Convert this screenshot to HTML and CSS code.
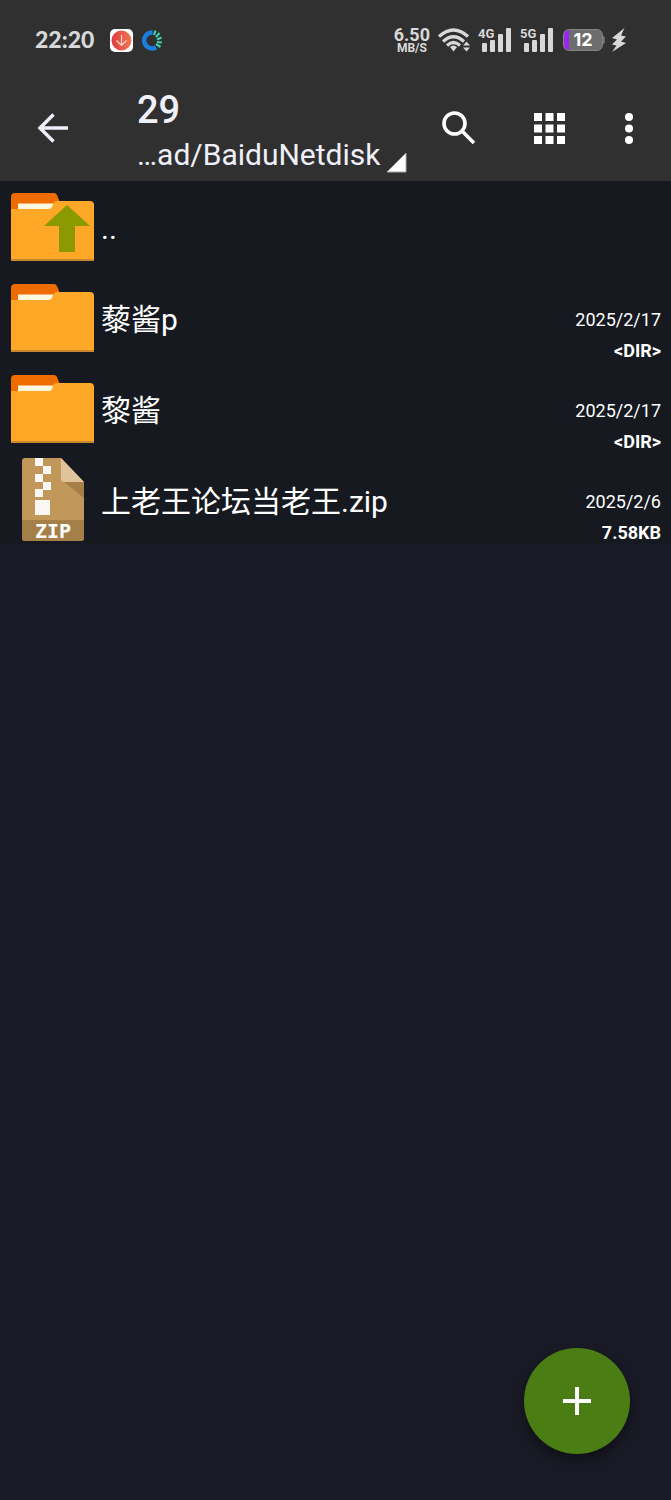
FILE: index.html
```html
<!DOCTYPE html>
<html lang="zh-CN">
<head>
<meta charset="utf-8">
<meta name="viewport" content="width=device-width, initial-scale=1">
<title>BaiduNetdisk</title>
<link rel="stylesheet" href="styles.css">
</head>
<body>
<svg class="defs" aria-hidden="true">
  <symbol id="folder" viewBox="0 0 84 84">
    <path fill="#ef6c00" d="M0 32V12q0-4 4-4h39q2 0 3 2l4 10v12z"/>
    <path fill="#fff8e1" d="M7 18.500h38v6H7z"/>
    <path fill="#ffa726" d="M0 24h38q2 0 3-2l1-3q1-3 4-3h33q4 0 4 4v56H0z"/>
    <path fill="#c9872d" d="M0 74h83v2H0z"/>
  </symbol>
</svg>
<header class="header">
  <div class="status">
    <time class="clock">22:20</time>
    <svg class="app-download" width="23" height="23" viewBox="0 0 23 23" aria-hidden="true">
      <defs><linearGradient id="red" x1="0" x2="1"><stop stop-color="#df3a42"/><stop offset="1" stop-color="#ee7852"/></linearGradient></defs>
      <rect width="23" height="23" rx="5" fill="#fff"/>
      <circle cx="11.500" cy="11.500" r="10" fill="url(#red)"/>
      <path d="M11.500 6v10M6.500 11.500l5 5 5-5" fill="none" stroke="#ffd9d0" stroke-width="1.200"/>
    </svg>
    <svg class="app-ring" width="21" height="21" viewBox="0 0 21 21" aria-hidden="true" fill="none">
      <path d="M11.500 2.500A8 8 0 1 0 15 17.500" stroke="#1b7fe0" stroke-width="4.500"/>
      <g stroke="#3fd0ae" stroke-width="2.200"><path d="M13 5l1.500-4.500M15 7l3.500-4M16 9.500l4.500-2M16 12l5 .5M15 14l4.500 3"/></g>
    </svg>
    <div class="speed"><span class="speed-value">6.50</span><span class="speed-unit">MB/S</span></div>
    <svg class="wifi" width="33" height="24" viewBox="0 0 33 24" aria-hidden="true">
      <g fill="none" stroke="#d8d8d8" stroke-width="3.200"><path d="M1 8.500Q15.500-4.500 30 8.500M5 13.500Q15.500 4 26 13.500M9 17.500Q15.500 11.500 22 17.500"/></g>
      <path fill="#d8d8d8" d="M12 19q3.500-3 7 0l-3.500 4.500zM25 17.500l3.500-4 3.500 4zM25 19.500h7l-3.500 4z"/>
    </svg>
    <div class="signal">
      <span class="network">4G</span>
      <svg width="29" height="24" viewBox="0 0 29 24" aria-hidden="true" fill="#d8d8d8"><rect y="15" width="5" height="9" rx="1"/><rect x="8" y="12" width="5" height="12" rx="1"/><rect x="16" y="6" width="5" height="18" rx="1"/><rect x="24" width="5" height="24" rx="1"/></svg>
    </div>
    <div class="signal">
      <span class="network">5G</span>
      <svg width="29" height="24" viewBox="0 0 29 24" aria-hidden="true" fill="#d8d8d8"><rect y="15" width="5" height="9" rx="1"/><rect x="8" y="12" width="5" height="12" rx="1"/><rect x="16" y="6" width="5" height="18" rx="1"/><rect x="24" width="5" height="24" rx="1"/></svg>
    </div>
    <div class="battery">12</div>
    <svg class="bolt" width="14" height="24" viewBox="0 0 14 24" aria-hidden="true"><path fill="#d8d8d8" d="M12.500 0L0 10l5 1.500-5 5 4.500 1L0 24l14-9-5-1.500 5-5-5-1z"/></svg>
  </div>
  <div class="toolbar">
    <button class="tool back" aria-label="返回"><svg width="32" height="30" viewBox="0 0 32 30" fill="none" stroke="#f0f0fa" stroke-width="3.500"><path d="M31 15H3M16.500 1.500L3 15l13.500 13.500"/></svg></button>
    <div class="heading">
      <h1 class="title">29</h1>
      <button class="path">…ad/BaiduNetdisk<svg class="corner" width="21" height="21" viewBox="0 0 21 21" aria-hidden="true"><path fill="#fff" stroke="#aaa" d="M20 1v19H1z"/></svg></button>
    </div>
    <button class="tool search" aria-label="搜索"><svg width="34" height="34" viewBox="0 0 34 34" fill="none" stroke="#fff" stroke-width="3.600"><circle cx="12.500" cy="12.500" r="10.500"/><path d="M20.500 20.500L32 32"/></svg></button>
    <button class="tool grid" aria-label="网格视图"><svg width="31" height="31" viewBox="0 0 31 31" fill="#fff"><path d="M0 0h8v8H0zM11.500 0h8v8h-8zM23 0h8v8h-8zM0 11.500h8v8H0zM11.500 11.500h8v8h-8zM23 11.500h8v8h-8zM0 23h8v8H0zM11.500 23h8v8h-8zM23 23h8v8h-8z"/></svg></button>
    <button class="tool more" aria-label="更多"><svg width="8" height="31" viewBox="0 0 8 31" fill="#fff"><circle cx="4" cy="4" r="4"/><circle cx="4" cy="15.500" r="4"/><circle cx="4" cy="27" r="4"/></svg></button>
  </div>
</header>
<main>
  <ul class="files">
    <li><a class="file" href="#up">
      <svg class="icon" viewBox="0 0 84 84" aria-hidden="true"><use href="#folder"/><path fill="#8a9a00" d="M56 20L79 41H64v26H48V41H33z"/></svg>
      <span class="name">..</span>
    </a></li>
    <li><a class="file" href="#d1">
      <svg class="icon" viewBox="0 0 84 84" aria-hidden="true"><use href="#folder"/></svg>
      <span class="name">藜酱p</span>
      <span class="meta"><time>2025/2/17</time><b>&lt;DIR&gt;</b></span>
    </a></li>
    <li><a class="file" href="#d2">
      <svg class="icon" viewBox="0 0 84 84" aria-hidden="true"><use href="#folder"/></svg>
      <span class="name">黎酱</span>
      <span class="meta"><time>2025/2/17</time><b>&lt;DIR&gt;</b></span>
    </a></li>
    <li><a class="file" href="#zip">
      <svg class="icon" viewBox="0 0 84 84" aria-hidden="true">
        <path fill="#c19859" d="M14 0h36l23 24v56q0 3-3 3H14q-3 0-3-3V3q0-3 3-3z"/>
        <path fill="#a47f47" d="M53 24h20v16zM11 62h62v18q0 3-3 3H14q-3 0-3-3z"/>
        <path fill="#dfc39a" d="M50 0l23 24H53q-3 0-3-3z"/>
        <path fill="#faf8f4" d="M24 0h8v8h-8zM32 8h8v8h-8zM24 16h8v8h-8zM32 24h8v8h-8zM24 31h8v8h-8zM24 42h15v15H24z"/>
        <text class="zip-label" x="42" y="80" text-anchor="middle">ZIP</text>
      </svg>
      <span class="name">上老王论坛当老王.zip</span>
      <span class="meta"><time>2025/2/6</time><b>7.58KB</b></span>
    </a></li>
  </ul>
</main>
<button class="fab" aria-label="新建"><svg width="28" height="28" viewBox="0 0 28 28" stroke="#fff" stroke-width="4"><path d="M14 0v28M0 14h28"/></svg></button>
</body>
</html>
```

FILE: styles.css
```css
* { box-sizing: border-box; }

body {
  margin: 0;
  min-height: 100vh;
  background: #1a1a26;
  color: #fff;
  font-family: Roboto, "Noto Sans CJK SC", sans-serif;
}

button {
  padding: 0;
  border: 0;
  background: none;
  color: inherit;
  font: inherit;
  cursor: pointer;
}

svg { display: block; flex: none; }
.defs { position: absolute; width: 0; height: 0; }

.header { background: #303030; }

.status {
  display: flex;
  align-items: center;
  height: 80px;
  padding: 0 45px 0 35px;
  color: #d8d8d8;
}
.clock {
  width: 75px;
  padding-bottom: 2px;
  font-family: Lato, sans-serif;
  font-size: 23px;
  font-weight: 900;
}
.app-ring { margin-left: 8px; }

.speed {
  display: flex;
  flex-direction: column;
  align-items: center;
  margin-left: auto;
  font-weight: 700;
}
.speed-value { font-size: 18px; line-height: 16px; }
.speed-unit { font-size: 12px; line-height: 11px; }
.wifi { margin-left: 8px; }

.signal {
  position: relative;
  margin-left: 11px;
}
.signal + .signal { margin-left: 13px; }
.network {
  position: absolute;
  top: -1px;
  left: -4px;
  font-size: 13px;
  font-weight: 700;
  line-height: 13px;
}

.battery {
  position: relative;
  width: 40px;
  margin: 0 9px 0 10px;
  border: 1px solid #858585;
  border-radius: 6px;
  background: linear-gradient(90deg, #9a27ed 5px, #6d6d6d 5px);
  color: #fff;
  font-family: Inter, sans-serif;
  font-size: 18px;
  font-weight: 700;
  line-height: 20px;
  text-align: center;
}
.battery::after {
  content: "";
  position: absolute;
  top: 6px;
  right: -3px;
  width: 2px;
  height: 8px;
  border-radius: 0 2px 2px 0;
  background: #6d6d6d;
}

.toolbar {
  display: flex;
  align-items: center;
  height: 101px;
  padding: 0 38px 5px 37px;
}
.tool { display: flex; }
.heading {
  flex: 1;
  min-width: 0;
  margin-left: 68px;
  padding-top: 8px;
  color: #f0f0fa;
}
.title {
  margin: 0;
  font-size: 38px;
  font-weight: 500;
  line-height: 46px;
}
.path {
  display: flex;
  align-items: flex-end;
  gap: 6px;
  font-size: 30px;
  line-height: 44px;
}
.corner { margin-bottom: 4px; }
.grid { margin-left: 58px; }
.more { margin-left: 60px; }

.files {
  margin: 0;
  padding: 0;
  list-style: none;
  background: #161920;
}
.file {
  display: flex;
  align-items: flex-start;
  height: 91px;
  padding: 0 10px 0 11px;
  color: inherit;
  text-decoration: none;
}
.icon { width: 84px; height: 84px; margin-top: 4px; }
.zip-label {
  fill: #fff;
  font: 700 20px "DejaVu Sans Mono", monospace;
}
.name {
  flex: 1;
  padding: 32px 0 0 6px;
  font-size: 30px;
  line-height: 32px;
}
.meta {
  display: flex;
  flex-direction: column;
  gap: 7px;
  padding-top: 36px;
  font-size: 18px;
  line-height: 24px;
  text-align: right;
}

.fab {
  position: fixed;
  right: 41px;
  bottom: 46px;
  display: grid;
  place-items: center;
  width: 106px;
  height: 106px;
  border-radius: 50%;
  background: #4a7e14;
  box-shadow: 0 6px 12px rgba(0, 0, 0, 0.4);
}
```
